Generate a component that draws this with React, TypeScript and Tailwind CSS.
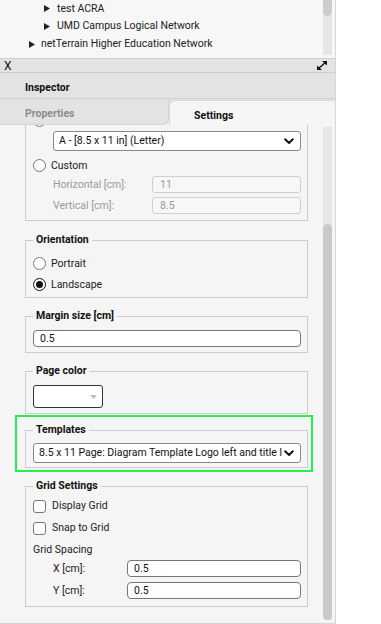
import React from 'react'

const Chevron = () => (
  <svg width="10" height="7" viewBox="0 0 10 7" className="shrink-0">
    <path d="M1.2 1.3 L5 5 L8.8 1.3" fill="none" stroke="#111" strokeWidth="2" strokeLinecap="round" strokeLinejoin="round" />
  </svg>
)

const Triangle = () => (
  <svg width="6" height="7" viewBox="0 0 6 7" className="shrink-0">
    <path d="M0 0 L6 3.5 L0 7 Z" fill="#222" />
  </svg>
)

const ExpandIcon = () => (
  <svg width="12" height="11" viewBox="0 0 12 11">
    <path d="M2.5 8.5 L9.5 2.5" stroke="#111" strokeWidth="1.4" />
    <path d="M6 1 L11 1 L11 5.5 Z" fill="#111" />
    <path d="M1 5.5 L1 10 L6 10 Z" fill="#111" />
  </svg>
)

const Radio = ({ checked = false, label }: { checked?: boolean; label?: string }) => (
  <div className="flex items-center h-[21px]">
    <span
      className={
        checked
          ? 'w-[13px] h-[13px] rounded-full border border-[#111] bg-white flex items-center justify-center'
          : 'w-[13px] h-[13px] rounded-full border border-[#777] bg-white'
      }
    >
      {checked && <span className="w-[7px] h-[7px] rounded-full bg-[#111]" />}
    </span>
    {label && <span className="ml-[5px] text-[#222]">{label}</span>}
  </div>
)

const Checkbox = ({ label }: { label: string }) => (
  <div className="flex items-center h-[22px]">
    <span className="w-[13px] h-[13px] rounded-[3px] border border-[#777] bg-white" />
    <span className="ml-[6px] text-[#222]">{label}</span>
  </div>
)

const Fieldset = ({ legend, children, className = '' }: { legend?: string; children: React.ReactNode; className?: string }) => (
  <fieldset className={`border border-[#cccccc] pl-[7px] pr-[6px] ${className}`}>
    <legend className="px-[3px] font-bold text-[#111] leading-[14px] min-h-[14px]">{legend}</legend>
    {children}
  </fieldset>
)

const TextInput = ({ value, w = '' }: { value: string; w?: string }) => (
  <div className={`h-[17px] bg-white border border-[#777] rounded-[4px] flex items-center pl-[6px] text-[#111] ${w}`}>{value}</div>
)

export default function App() {
  return (
    <div className="w-[381px] h-[624px] bg-white font-['Roboto',sans-serif] text-[10.5px] overflow-hidden">
      <div className="w-[336px] h-[624px] flex flex-col border-r border-[#d6d6d6] border-b bg-[#f5f5f5]">
        {/* tree */}
        <div className="h-[58px] flex bg-[#f7f7f7] shrink-0">
          <div className="flex-1 text-[#222]">
            <div className="h-[17px] flex items-center pl-[44px] gap-[7px]"><Triangle />test ACRA</div>
            <div className="h-[18px] flex items-center pl-[44px] gap-[7px]"><Triangle />UMD Campus Logical Network</div>
            <div className="h-[18px] flex items-center pl-[29px] gap-[6px]"><Triangle />netTerrain Higher Education Network</div>
          </div>
          <div className="w-[9px] mr-[3px] h-[55px] bg-[#e6e6e6] flex flex-col">
            <div className="h-[16px] rounded-b-full bg-[#cccccc]" />
          </div>
        </div>
        {/* close bar */}
        <div className="h-[15px] shrink-0 border-t border-b border-[#cfcfcf] bg-[#e3e3e3] flex items-center justify-between pl-[4px] pr-[7px]">
          <span className="text-[#111] text-[12px] leading-none">X</span>
          <ExpandIcon />
        </div>
        {/* header */}
        <div className="h-[26px] shrink-0 bg-[#e3e3e3] border-b border-[#cfcfcf] flex items-center pl-[25px] pt-[5px] font-bold text-[#111]">
          Inspector
        </div>
        {/* tabs */}
        <div className="h-[26px] shrink-0 flex">
          <div className="w-[169px] bg-[#f5f5f5]">
            <div className="h-full bg-[#e3e3e3] border-b border-r border-[#d4d4d4] rounded-br-[6px] flex items-center pl-[25px] pt-[5px] font-bold text-[#8c8c8c]">
              Properties
            </div>
          </div>
          <div className="flex-1 bg-[#e3e3e3]">
            <div className="h-full bg-[#f6f6f6] mt-[1px] rounded-tl-[6px] border-l border-t border-[#dadada] flex items-center pl-[24px] pt-[5px] font-bold text-[#111]">
              Settings
            </div>
          </div>
        </div>
        {/* content */}
        <div className="flex-1 flex min-h-0">
          <div className="flex-1 pl-[25px] pr-[15px] overflow-hidden">
            <Fieldset className="-mt-[33px] pt-[4px] pb-[6px]">
              <Radio />
              <div className="ml-[20px] h-[20px] bg-white border border-[#888] rounded-[3px] flex items-center justify-between pl-[5px] pr-[6px] text-[#111]">
                <span>A - [8.5 x 11 in] (Letter)</span>
                <Chevron />
              </div>
              <div className="mt-[4px]"><Radio label="Custom" /></div>
              <div className="flex items-center">
                <span className="ml-[20px] w-[99px] text-[#9a9a9a]">Horizontal [cm]:</span>
                <div className="flex-1 h-[17px] border border-[#cfcfcf] rounded-[3px] bg-[#f7f7f7] flex items-center pl-[7px] text-[#9a9a9a]">11</div>
              </div>
              <div className="flex items-center mt-[4px]">
                <span className="ml-[20px] w-[99px] text-[#9a9a9a]">Vertical [cm]:</span>
                <div className="flex-1 h-[17px] border border-[#cfcfcf] rounded-[3px] bg-[#f7f7f7] flex items-center pl-[7px] text-[#9a9a9a]">8.5</div>
              </div>
            </Fieldset>

            <Fieldset legend="Orientation" className="mt-[12px] pt-[6px] pb-[2px]">
              <Radio label="Portrait" />
              <Radio checked label="Landscape" />
            </Fieldset>

            <Fieldset legend="Margin size [cm]" className="mt-[11px] pt-[7px] pb-[5px]">
              <TextInput value="0.5" />
            </Fieldset>

            <Fieldset legend="Page color" className="mt-[11px] pt-[7px] pb-[5px]">
              <div className="w-[70px] h-[23px] bg-white border border-[#333] rounded-[3px] flex items-center justify-end pr-[5px]">
                <svg width="7" height="4" viewBox="0 0 7 4"><path d="M0 0 L7 0 L3.5 4 Z" fill="#bdbdbd" /></svg>
              </div>
            </Fieldset>

            <div className="relative mt-[9px]">
              <Fieldset legend="Templates" className="pt-[6px] pb-[4px]">
                <div className="h-[20px] bg-white border border-[#888] rounded-[3px] flex items-center justify-between pl-[5px] pr-[6px] text-[#111] overflow-hidden">
                  <span className="whitespace-nowrap overflow-hidden">8.5 x 11 Page: Diagram Template Logo left and title l</span>
                  <Chevron />
                </div>
              </Fieldset>
              <div className="absolute -left-[10px] -right-[5px] -top-[8px] -bottom-[4px] border-2 border-[#22f24c] pointer-events-none" />
            </div>

            <Fieldset legend="Grid Settings" className="mt-[11px] pt-[2px] pb-[7px]">
              <Checkbox label="Display Grid" />
              <Checkbox label="Snap to Grid" />
              <div className="h-[21px] flex items-center text-[#222]">Grid Spacing</div>
              <div className="flex items-center">
                <span className="ml-[20px] w-[74px] text-[#222]">X [cm]:</span>
                <TextInput value="0.5" w="flex-1" />
              </div>
              <div className="flex items-center mt-[5px]">
                <span className="ml-[20px] w-[74px] text-[#222]">Y [cm]:</span>
                <TextInput value="0.5" w="flex-1" />
              </div>
            </Fieldset>
          </div>
          <div className="w-[9px] mr-[3px] mt-[2px] mb-[3px] bg-[#e6e6e6] flex flex-col">
            <div className="h-[97px] shrink-0" />
            <div className="flex-1 rounded-full bg-[#c9c9c9]" />
          </div>
        </div>
      </div>
    </div>
  )
}
